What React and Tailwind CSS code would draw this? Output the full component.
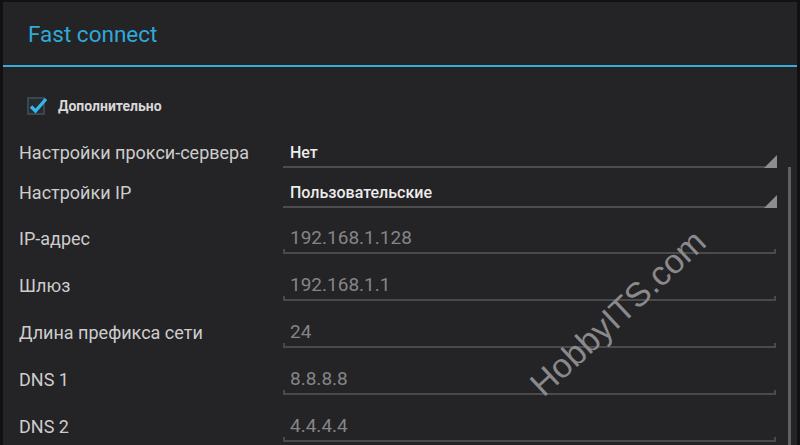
const ROWS = [
  { label: "Настройки прокси-сервера", value: "Нет", kind: "spinner", h: "h-[41px]" },
  { label: "Настройки IP", value: "Пользовательские", kind: "spinner", h: "h-[40px]" },
  { label: "IP-адрес", value: "192.168.1.128", kind: "edit", h: "h-[46px]" },
  { label: "Шлюз", value: "192.168.1.1", kind: "edit", h: "h-[47px]" },
  { label: "Длина префикса сети", value: "24", kind: "edit", h: "h-[47px]" },
  { label: "DNS 1", value: "8.8.8.8", kind: "edit", h: "h-[47px]" },
  { label: "DNS 2", value: "4.4.4.4", kind: "edit", h: "h-[47px]" },
];

function SpinnerValue({ value }) {
  return (
    <div className="flex flex-1 flex-col">
      <div className="flex h-[26px] items-center pl-[7px] text-[16px] font-medium text-[#ececec]">{value}</div>
      <div className="flex h-[2px] items-end">
        <div className="h-[2px] flex-1 bg-[#4d4d4f]" />
        <svg width="13" height="13" viewBox="0 0 13 13" className="-ml-[1px] shrink-0">
          <polygon points="13,0 13,13 0,13" fill="#8d8d8f" />
        </svg>
      </div>
    </div>
  );
}

function EditValue({ value }) {
  return (
    <div className="flex flex-1 flex-col pr-[1px]">
      <div className="flex h-[22px] items-center pl-[7px] text-[19px] text-[#858587]">{value}</div>
      <div className="h-[5px] border-x-2 border-b-2 border-[#4a4a4c]" />
    </div>
  );
}

export default function App() {
  return (
    <div
      className="relative h-[445px] w-[800px] overflow-hidden bg-[#111] pt-[2px] pl-[3px] pr-[3px]"
      style={{ fontFamily: "Roboto, 'Liberation Sans', sans-serif" }}
    >
      <div className="flex h-full flex-col bg-[#242325]">
        <div className="flex h-[63px] items-center pl-[25px] pt-[2px] text-[22.5px] text-[#2fa9d8]">Fast connect</div>
        <div className="h-[2px] bg-[#36acd9]" />

        <div className="flex min-h-0 flex-1">
          <div className="flex flex-1 flex-col pl-[16px]">
            <div className="flex h-[60px] shrink-0 items-center gap-[13px] pl-[8px] pt-[18px]">
              <div className="flex h-[18px] w-[18px] items-end border-2 border-[#3c464e] bg-[#252b30]">
                <svg width="19" height="17" viewBox="0 0 19 17" className="-mb-[1px] ml-[0px] shrink-0">
                  <path d="M2 9.5 L6.5 14 L17 2" stroke="#37b5e6" strokeWidth="3.4" fill="none" />
                </svg>
              </div>
              <span className="text-[14px] font-bold text-[#d8d8d8]">Дополнительно</span>
            </div>

            {ROWS.map((row) => (
              <div key={row.label} className={`flex shrink-0 items-end ${row.h}`}>
                <div className="flex h-[28px] w-[264px] shrink-0 items-center pb-[3px] text-[18px] text-[#cdcdcd]">
                  {row.label}
                </div>
                {row.kind === "spinner" ? <SpinnerValue value={row.value} /> : <EditValue value={row.value} />}
              </div>
            ))}
          </div>

          <div className="flex w-[20px] flex-col items-center pl-[4px] pt-[100px]">
            <div className="h-full w-[3px] bg-[#606062]" />
          </div>
        </div>
      </div>

      <div
        className="pointer-events-none absolute left-[618px] top-[313px] -translate-x-1/2 -translate-y-1/2 -rotate-[43deg] whitespace-nowrap text-[34px] text-[#8a8a8c]"
        style={{ fontFamily: "'Liberation Sans', Arial, sans-serif" }}
      >
        HobbyITS.com
      </div>
    </div>
  );
}
